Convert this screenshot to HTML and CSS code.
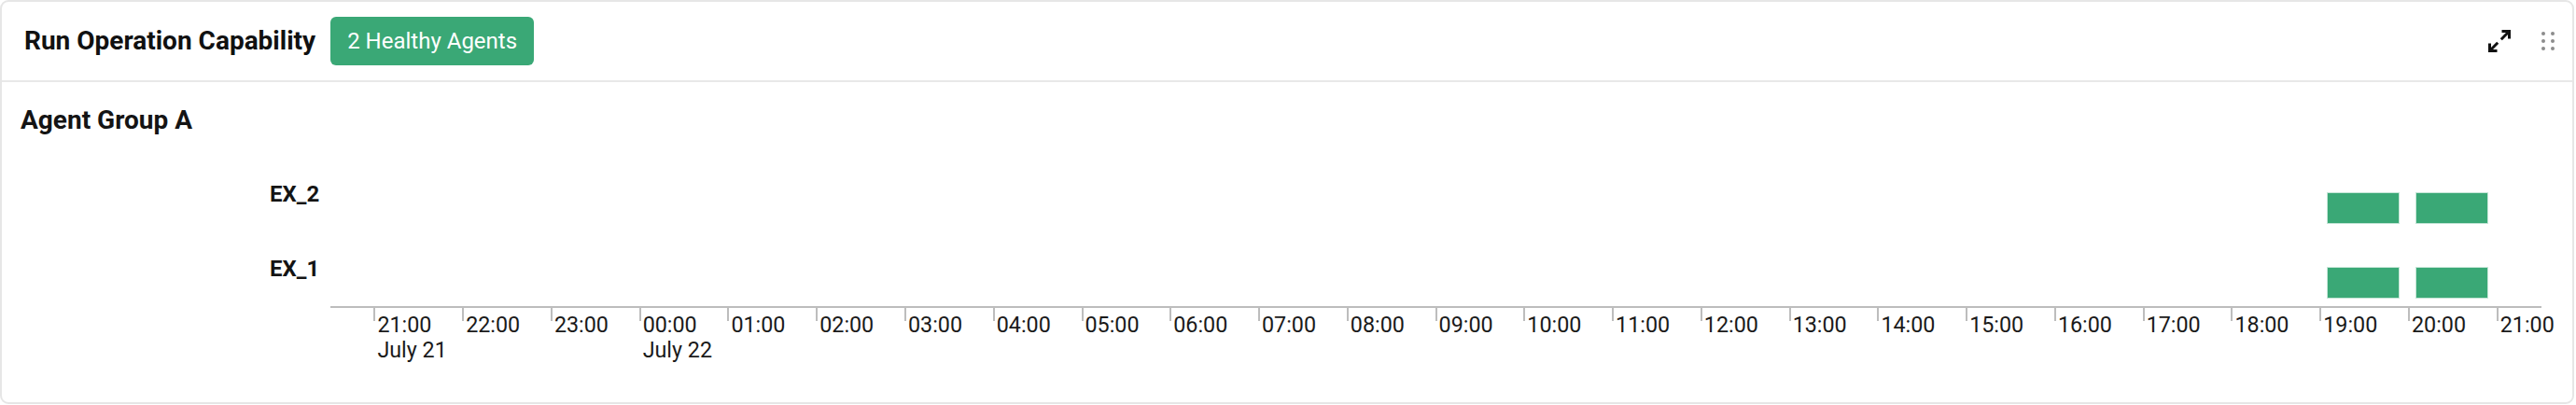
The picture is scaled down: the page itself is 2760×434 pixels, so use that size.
FILE: index.html
```html
<!DOCTYPE html>
<html lang="en">
<head>
<meta charset="utf-8">
<title>Run Operation Capability</title>
<link rel="stylesheet" href="styles.css">
</head>
<body>
<div class="card">
  <div class="card-header">
    <div class="title">Run Operation Capability</div>
    <div class="badge">2 Healthy Agents</div>
    <div class="actions">
      <svg class="expand" viewBox="0 0 24 24" width="24" height="24" aria-hidden="true">
        <path d="M14.5 1.5H22.5V9.5" fill="none" stroke="#111" stroke-width="3" stroke-linejoin="miter"/>
        <path d="M22 2L13.8 10.2" fill="none" stroke="#111" stroke-width="3"/>
        <path d="M1.5 14.5V22.5H9.5" fill="none" stroke="#111" stroke-width="3" stroke-linejoin="miter"/>
        <path d="M2 22L10.2 13.8" fill="none" stroke="#111" stroke-width="3"/>
      </svg>
      <div class="grip">
        <span class="dot"></span><span class="dot"></span>
        <span class="dot"></span><span class="dot"></span>
        <span class="dot"></span><span class="dot"></span>
      </div>
    </div>
  </div>
  <div class="card-body">
    <div class="group-title">Agent Group A</div>
    <div class="chart">
      <div class="row">
        <div class="row-label">EX_2</div>
        <div class="track">
          <div class="bar" style="left: 90.346%; width: 3.196%;"></div>
          <div class="bar" style="left: 94.344%; width: 3.196%;"></div>
        </div>
      </div>
      <div class="row">
        <div class="row-label">EX_1</div>
        <div class="track">
          <div class="bar" style="left: 90.346%; width: 3.196%;"></div>
          <div class="bar" style="left: 94.344%; width: 3.196%;"></div>
        </div>
      </div>
      <div class="axis">
        <div class="tick"><div class="tick-label">21:00<br>July 21</div></div>
        <div class="tick"><div class="tick-label">22:00</div></div>
        <div class="tick"><div class="tick-label">23:00</div></div>
        <div class="tick"><div class="tick-label">00:00<br>July 22</div></div>
        <div class="tick"><div class="tick-label">01:00</div></div>
        <div class="tick"><div class="tick-label">02:00</div></div>
        <div class="tick"><div class="tick-label">03:00</div></div>
        <div class="tick"><div class="tick-label">04:00</div></div>
        <div class="tick"><div class="tick-label">05:00</div></div>
        <div class="tick"><div class="tick-label">06:00</div></div>
        <div class="tick"><div class="tick-label">07:00</div></div>
        <div class="tick"><div class="tick-label">08:00</div></div>
        <div class="tick"><div class="tick-label">09:00</div></div>
        <div class="tick"><div class="tick-label">10:00</div></div>
        <div class="tick"><div class="tick-label">11:00</div></div>
        <div class="tick"><div class="tick-label">12:00</div></div>
        <div class="tick"><div class="tick-label">13:00</div></div>
        <div class="tick"><div class="tick-label">14:00</div></div>
        <div class="tick"><div class="tick-label">15:00</div></div>
        <div class="tick"><div class="tick-label">16:00</div></div>
        <div class="tick"><div class="tick-label">17:00</div></div>
        <div class="tick"><div class="tick-label">18:00</div></div>
        <div class="tick"><div class="tick-label">19:00</div></div>
        <div class="tick"><div class="tick-label">20:00</div></div>
        <div class="tick"><div class="tick-label">21:00</div></div>
      </div>
    </div>
  </div>
</div>
</body>
</html>
```
FILE: styles.css
```css
* { box-sizing: border-box; }
html, body { margin: 0; padding: 0; background: #fff; }
body { font-family: Roboto, "Liberation Sans", sans-serif; color: #141414; }

.card {
  width: 2758px;
  height: 433px;
  border: 2px solid #e6e6e6;
  border-radius: 9px;
  overflow: hidden;
  background: #fff;
}

.card-header {
  height: 86px;
  border-bottom: 2px solid #e8e8e8;
  display: flex;
  align-items: center;
  padding-left: 24px;
}

.title {
  font-size: 28px;
  font-weight: 700;
  line-height: 32px;
  color: #111;
}

.badge {
  margin-left: 16px;
  height: 52px;
  padding: 0 18px;
  border-radius: 6px;
  background: #3aa876;
  color: #fff;
  font-size: 24px;
  display: flex;
  align-items: center;
}

.actions {
  margin-left: auto;
  display: flex;
  align-items: center;
}

.expand { display: block; width: 24px; height: 24px; }

.grip {
  margin-left: 33px;
  margin-right: 19px;
  display: grid;
  grid-template-columns: 4px 4px;
  column-gap: 6px;
  row-gap: 4.4px;
}

.dot {
  width: 4px;
  height: 4px;
  border-radius: 50%;
  background: #8c8c8c;
}

.card-body { padding: 24.7px 33px 0 20px; }

.group-title {
  font-size: 28px;
  font-weight: 700;
  line-height: 32px;
  color: #141414;
}

.chart { margin: 49.8px 0 0 267px; }

.row {
  display: grid;
  grid-template-columns: 65px 1fr;
  height: 44.5px;
}
.row + .row { margin-top: 35.5px; }

.row-label {
  font-size: 24px;
  font-weight: 700;
  line-height: 28px;
  color: #141414;
}

.track { position: relative; }

.bar {
  position: absolute;
  bottom: 0;
  height: 32.3px;
  background: #3aa876;
  box-shadow: 0 0 0 1px rgba(58, 168, 118, 0.3);
}

.axis {
  margin-left: 65px;
  margin-top: 9px;
  border-top: 2px solid #bdbdbd;
  display: flex;
}

.tick {
  flex: 1 1 0;
  position: relative;
  min-width: 0;
}
.tick::before {
  content: "";
  position: absolute;
  left: calc(50% - 1px);
  top: 0;
  width: 2px;
  height: 14px;
  background: #bdbdbd;
}

.tick-label {
  margin-left: calc(50% + 3px);
  padding-top: 5px;
  font-size: 23.3px;
  line-height: 27.5px;
  white-space: nowrap;
  color: #1a1a1a;
}
```
